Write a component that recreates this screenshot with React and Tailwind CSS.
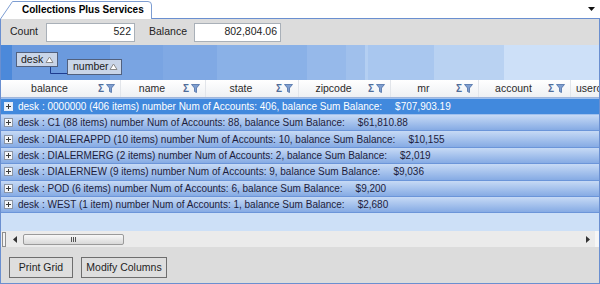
import React from 'react'

const COLUMNS = [
  { label: 'balance', w: 'w-[120px]' },
  { label: 'name', w: 'w-[85px]' },
  { label: 'state', w: 'w-[93px]' },
  { label: 'zipcode', w: 'w-[92px]' },
  { label: 'mr', w: 'w-[88px]' },
  { label: 'account', w: 'w-[92px]' },
]

const GROUPS = [
  { desk: '0000000', items: '406 items', count: 406, sum: '$707,903.19' },
  { desk: 'C1', items: '88 items', count: 88, sum: '$61,810.88' },
  { desk: 'DIALERAPPD', items: '10 items', count: 10, sum: '$10,155' },
  { desk: 'DIALERMERG', items: '2 items', count: 2, sum: '$2,019' },
  { desk: 'DIALERNEW', items: '9 items', count: 9, sum: '$9,036' },
  { desk: 'POD', items: '6 items', count: 6, sum: '$9,200' },
  { desk: 'WEST', items: '1 item', count: 1, sum: '$2,680' },
]

function SortGlyph() {
  return (
    <svg width="9" height="8" viewBox="0 0 9 8" className="shrink-0">
      <path d="M4.5 1 L8 6.5 H1 Z" fill="#fff" stroke="#8a8a8a" strokeWidth="1" />
    </svg>
  )
}

function FilterIcons() {
  return (
    <div className="flex items-center gap-[2px] shrink-0 pr-[5px]">
      <span className="text-[10px] font-bold leading-none text-[#4f6c99]">Σ</span>
      <svg width="9" height="9" viewBox="0 0 9 9">
        <path d="M0.5 0.5 H8.5 L5.5 4 V8.5 L3.5 7.5 V4 Z" fill="#7f9fd0" stroke="#4d6fa6" strokeWidth="0.8" />
      </svg>
    </div>
  )
}

function ExpandBox({ selected }) {
  return (
    <div className={`w-[9px] h-[9px] border ${selected ? 'border-[#dfe9f7] bg-[#e9f0fa]' : 'border-[#8b95a5] bg-[#f4f6f9]'} flex items-center justify-center shrink-0`}>
      <svg width="5" height="5" viewBox="0 0 5 5">
        <path d="M0 2.5 H5 M2.5 0 V5" stroke="#3b3b3b" strokeWidth="1" />
      </svg>
    </div>
  )
}

function GroupRow({ group, selected }) {
  const label = `desk : ${group.desk} (${group.items}) number Num of Accounts: ${group.count}, balance Sum Balance:`
  return (
    <div
      className={
        selected
          ? 'h-[17px] flex items-center pl-[3px] gap-[5px] bg-[#4189dd] border-y border-[#9fc0ee] text-white text-[10px]'
          : 'h-[16.4px] flex items-center pl-[3px] gap-[5px] bg-gradient-to-b from-[#c7daf5] to-[#86abe4] border-b border-[#6b95d9] text-[#1d1d3c] text-[10px]'
      }
    >
      <ExpandBox selected={selected} />
      <span className="whitespace-nowrap">
        {label}
        <span className="ml-[13px]">{group.sum}</span>
      </span>
    </div>
  )
}

export default function App() {
  return (
    <div className="w-[600px] h-[284px] bg-white flex flex-col overflow-hidden font-['Liberation_Sans',Arial,sans-serif] text-[10.5px] text-[#1e1e1e]">
      {/* tab strip */}
      <div className="h-[19px] flex shrink-0">
        <div className="relative w-[152px] h-[19px]">
          <svg width="152" height="19" viewBox="0 0 152 19" className="absolute inset-0">
            <path d="M0.5 19 L12.5 1.5 H148 Q151.5 1.5 151.5 5 V19" fill="#fff" stroke="#7d9dd2" strokeWidth="1" />
          </svg>
          <div className="relative h-full flex items-center pl-[22px] font-bold text-[10px] whitespace-nowrap text-black">
            Collections Plus Services
          </div>
        </div>
        <div className="flex-1 border-b border-[#6a8fd0] flex items-center justify-end pr-[5px]">
          <svg width="7" height="4" viewBox="0 0 7 4">
            <path d="M0 0 H7 L3.5 4 Z" fill="#111" />
          </svg>
        </div>
      </div>

      {/* panel */}
      <div className="flex-1 flex flex-col border-x border-b border-[#6a8fd0] bg-[#dcdcdc] min-h-0">
        <div className="h-[26px] flex items-center shrink-0">
          <span className="ml-[9px] text-[#222]">Count</span>
          <div className="ml-[8px] w-[89px] h-[19px] bg-white border border-[#a9b0b8] flex items-center justify-end pr-[3px]">522</div>
          <span className="ml-[14px] text-[#222]">Balance</span>
          <div className="ml-[7px] w-[87px] h-[19px] bg-white border border-[#a9b0b8] flex items-center justify-end pr-[3px]">802,804.06</div>
        </div>

        {/* group-by panel */}
        <div className="relative h-[35px] shrink-0 bg-[linear-gradient(to_right,#4c89da_0px,#4c89da_11px,#6b9ade_11px,#6b9ade_109px,#79a4e2_109px,#79a4e2_162px,#80a9e4_162px,#80a9e4_216px,#8ab1e7_216px,#8ab1e7_306px,#96b9ea_306px,#96b9ea_345px,#a0c0ec_345px,#a0c0ec_364px,#b4cff2_364px,#b4cff2_367px,#a9c7ef_367px,#a9c7ef_433px,#b9d2f2_433px,#b9d2f2_503px,#cde0f8_503px)]">
          <svg width="20" height="12" viewBox="0 0 20 12" className="absolute left-[49px] top-[21px]">
            <path d="M0.5 0 V7.5 H20" fill="none" stroke="#1d3c8f" strokeWidth="1" />
          </svg>
          <div className="absolute left-[15px] top-[7px] h-[15px] w-[42px] bg-[#c9d5e8] border border-[#52617e] flex items-center justify-between pl-[4px] pr-[3px] text-[#1b1b1b]">
            desk
            <SortGlyph />
          </div>
          <div className="absolute left-[66px] top-[14px] h-[16px] w-[55px] bg-[#c9d5e8] border border-[#52617e] flex items-center justify-between pl-[5px] pr-[3px] text-[#1b1b1b]">
            number
            <SortGlyph />
          </div>
        </div>

        {/* column header */}
        <div className="h-[18px] shrink-0 flex bg-gradient-to-b from-white to-[#eef0f3] border-b border-[#9fb6dc] text-[#2a2a2a]">
          {COLUMNS.map((col) => (
            <div key={col.label} className={`${col.w} flex items-center border-r border-[#e2e5ea] shrink-0`}>
              <span className="flex-1 text-center">{col.label}</span>
              <FilterIcons />
            </div>
          ))}
          <div className="flex-1 flex items-center pl-[5px] overflow-hidden whitespace-nowrap">userc</div>
        </div>

        {/* grouped rows */}
        <div className="shrink-0 flex flex-col">
          {GROUPS.map((group, i) => (
            <GroupRow key={group.desk} group={group} selected={i === 0} />
          ))}
        </div>
        <div className="flex-1 bg-[#cde0f7]" />

        {/* horizontal scrollbar */}
        <div className="h-[16px] shrink-0 bg-[#ebebeb] flex items-center">
          <div className="ml-[1px] w-[4px] h-[15px] border border-[#8f8f8f] bg-[#f4f4f4]" />
          <svg width="4" height="7" viewBox="0 0 4 7" className="ml-[7px]">
            <path d="M4 0 V7 L0 3.5 Z" fill="#333" />
          </svg>
          <div className="ml-[6px] w-[101px] h-[11px] rounded-[2px] border border-[#9a9a9a] bg-gradient-to-b from-[#f8f8f8] to-[#d8d8d8] flex items-center justify-center">
            <div className="flex gap-[1px]">
              <div className="w-[1px] h-[5px] bg-[#555]" />
              <div className="w-[1px] h-[5px] bg-[#555]" />
              <div className="w-[1px] h-[5px] bg-[#555]" />
            </div>
          </div>
          <div className="flex-1" />
          <svg width="4" height="7" viewBox="0 0 4 7" className="mr-[5px]">
            <path d="M0 0 V7 L4 3.5 Z" fill="#333" />
          </svg>
          <div className="w-[4px] h-[16px] bg-[#f6f6f6]" />
        </div>

        {/* buttons */}
        <div className="h-[36px] shrink-0 flex items-start pt-[10px] pl-[8px] gap-[8px]">
          <button type="button" className="w-[64px] h-[21px] border border-[#6e6e6e] bg-[#dedede] text-[#1e1e1e]">Print Grid</button>
          <button type="button" className="w-[86px] h-[21px] border border-[#6e6e6e] bg-[#dedede] text-[#1e1e1e]">Modify Columns</button>
        </div>
      </div>
    </div>
  )
}
